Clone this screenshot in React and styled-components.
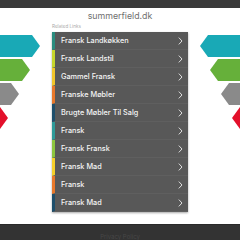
import React from 'react';
import styled, { createGlobalStyle } from 'styled-components';

const Global = createGlobalStyle`
    html, body {
        margin: 0;
        padding: 0;
        background: #ffffff;
        font-family: "Inter", "Open Sans", sans-serif;
        overflow: hidden;
    }
`;

const Page = styled.div`
    width: 240px;
    height: 240px;
    display: flex;
    flex-flow: column;
`;

const TopBar = styled.div`
    height: 8px;
    background: #3a3a3a;
    flex-shrink: 0;
`;

const Title = styled.h1`
    margin: 0;
    height: 14px;
    line-height: 15px;
    font-size: 8.8px;
    font-weight: 400;
    color: #707070;
    text-align: center;
`;

const Main = styled.div`
    display: grid;
    grid-template-columns: 52px 136px 52px;
    flex: 1;
`;

const Deco = styled.svg`
    display: block;
    margin-top: 13px;
`;

const Center = styled.div`
    display: flex;
    flex-flow: column;
`;

const Label = styled.div`
    height: 10px;
    line-height: 10px;
    font-size: 4.6px;
    color: #aaaaaa;
`;

const List = styled.ul`
    list-style: none;
    margin: 0;
    padding: 0;
    box-shadow: 0 1px 2px rgba(0, 0, 0, 0.35);
`;

const Row = styled.li`
    height: 18px;
    display: flex;
    align-items: center;
    justify-content: space-between;
    background: #585858;
    border-left: 3px solid ${p => p.accent};
    padding: 0 5px 0 6px;
    box-sizing: border-box;
    border-bottom: 1px solid #5f5f5f;
    color: #f4f4f4;
    font-size: 7.3px;
    font-weight: 500;
`;

const Footer = styled.div`
    height: 16px;
    margin-top: 12px;
    background: #333333;
    border-top: 1px solid #2a2a2a;
    display: flex;
    justify-content: center;
    padding-top: 8px;
    box-sizing: border-box;
    font-size: 6px;
    color: #474747;
`;

const links = [
    { text: 'Fransk Landkøkken', accent: '#2a8c7e' },
    { text: 'Fransk Landstil', accent: '#c6d62c' },
    { text: 'Gammel Fransk', accent: '#f2c62a' },
    { text: 'Franske Møbler', accent: '#e8782a' },
    { text: 'Brugte Møbler Til Salg', accent: '#1e4e6a' },
    { text: 'Fransk', accent: '#2e9a98' },
    { text: 'Fransk Fransk', accent: '#8cc63f' },
    { text: 'Fransk Mad', accent: '#f5d02a' },
    { text: 'Fransk', accent: '#e8782a' },
    { text: 'Fransk Mad', accent: '#1e4e6a' },
];

const arrows = [
    { color: '#19a9b6', y: 0, len: 40 },
    { color: '#66b03a', y: 24, len: 30 },
    { color: '#8a8a8a', y: 48, len: 19 },
    { color: '#e3102b', y: 72, len: 8 },
];

const Chevron = () => (
    <svg width="5" height="8" viewBox="0 0 5 8">
        <polyline points="0.8,0.6 4,4 0.8,7.4" fill="none" stroke="#ffffff" strokeWidth="0.8" />
    </svg>
);

const LeftArrows = () => (
    <Deco width="52" height="100" viewBox="0 0 52 100">
        {arrows.map(a => (
            <polygon
                key={a.color}
                points={`0,${a.y} ${a.len - 8},${a.y} ${a.len},${a.y + 11} ${a.len - 8},${a.y + 22} 0,${a.y + 22}`}
                fill={a.color}
            />
        ))}
    </Deco>
);

const RightArrows = () => (
    <Deco width="52" height="100" viewBox="0 0 52 100">
        {arrows.map(a => {
            const tip = 52 - a.len;
            return (
                <polygon
                    key={a.color}
                    points={`52,${a.y} ${tip + 8},${a.y} ${tip},${a.y + 11} ${tip + 8},${a.y + 22} 52,${a.y + 22}`}
                    fill={a.color}
                />
            );
        })}
    </Deco>
);

const App = () => (
    <Page>
        <Global />
        <TopBar />
        <Title>summerfield.dk</Title>
        <Main>
            <LeftArrows />
            <Center>
                <Label>Related Links</Label>
                <List>
                    {links.map((l, i) => (
                        <Row key={i} accent={l.accent}>
                            <span>{l.text}</span>
                            <Chevron />
                        </Row>
                    ))}
                </List>
            </Center>
            <RightArrows />
        </Main>
        <Footer>Privacy Policy</Footer>
    </Page>
);

export default App;
